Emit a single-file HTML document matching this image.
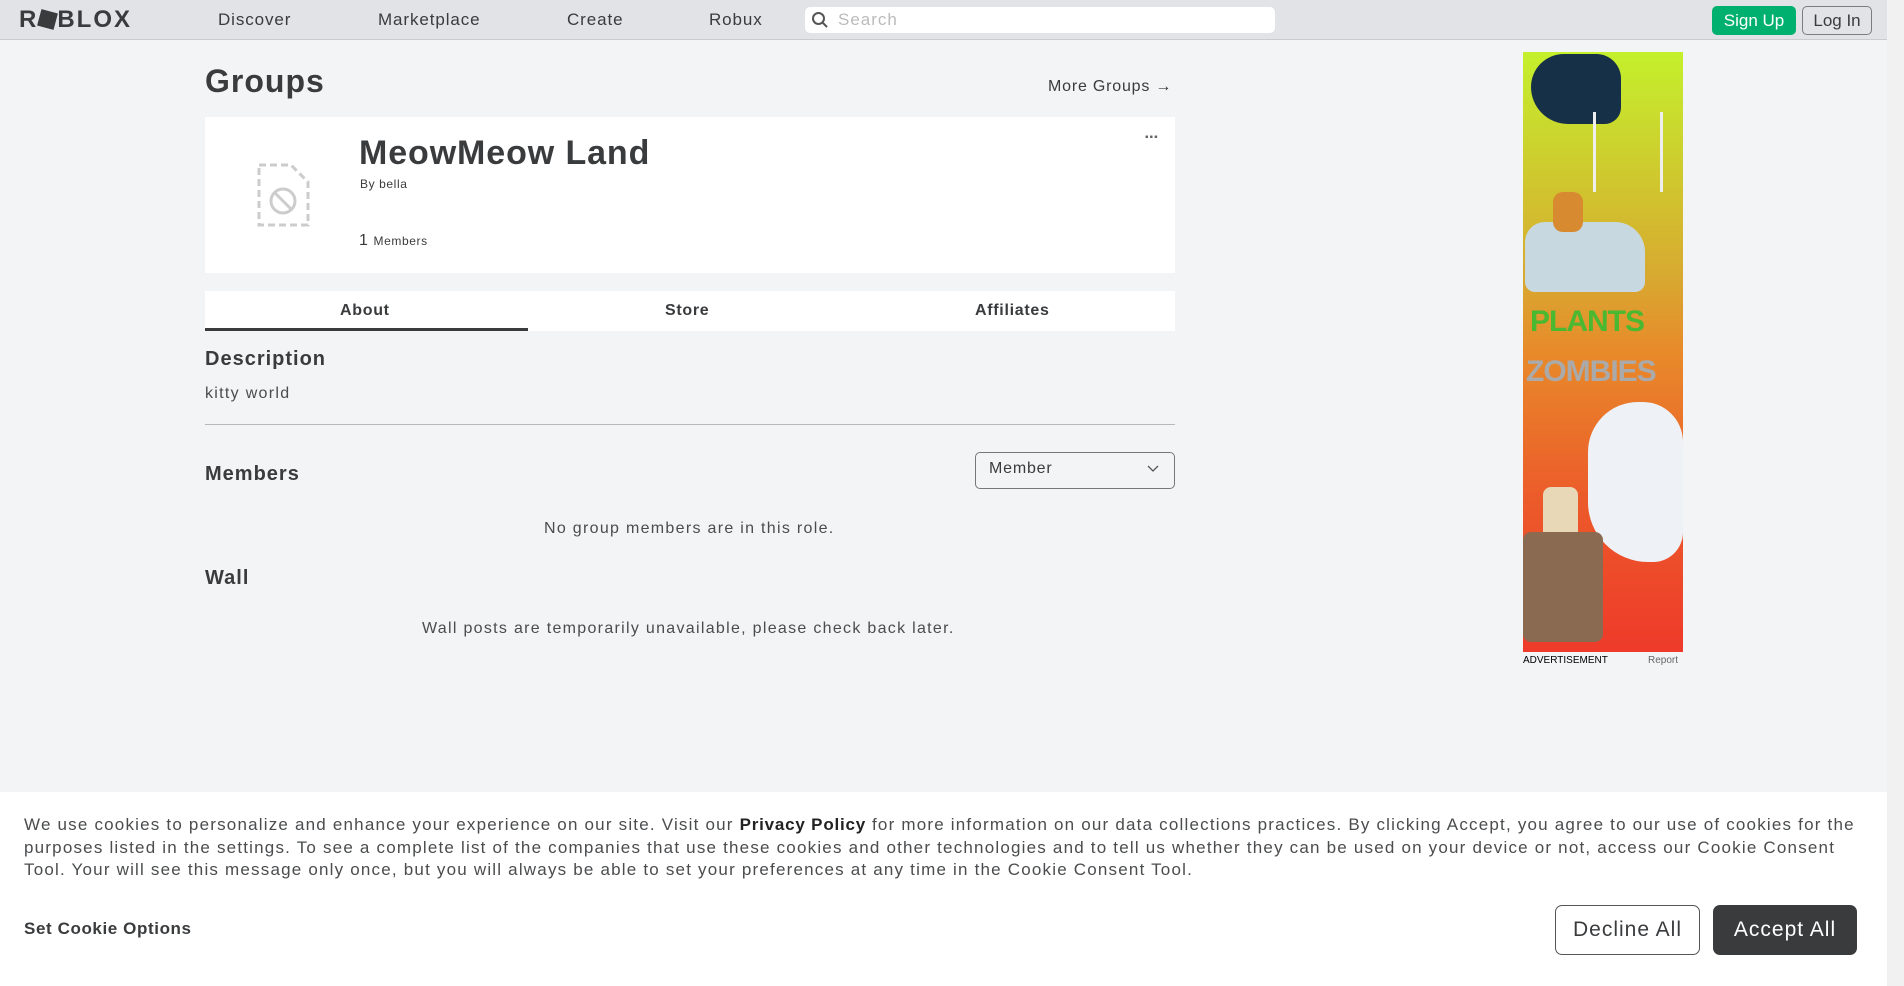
<!DOCTYPE html>
<html><head><meta charset="utf-8"><style>
*{box-sizing:border-box;margin:0;padding:0}
body{width:1904px;height:986px;overflow:hidden;background:#f2f4f5;font-family:"Liberation Sans",sans-serif;color:#393b3d;position:relative}
.a{position:absolute;white-space:nowrap}
.hdr{position:absolute;left:0;top:0;width:1887px;height:40px;background:#e1e3e6;border-bottom:1px solid #c9cbcd}
.nav{font-size:17px;color:#393b3d;top:10px;letter-spacing:0.9px}
.sb{position:absolute;right:0;top:0;width:17px;height:986px;background:#f1f1f1}
.t{letter-spacing:1.3px;color:#4a4c4e}
.h{letter-spacing:1px}
</style></head><body>
<div class="hdr"></div>
<div class="a" style="left:19px;top:6px;font-size:24px;font-weight:bold;color:#393b3d;letter-spacing:2px">R<span style="display:inline-block;width:17px;height:17px;background:#393b3d;transform:rotate(15deg);margin:0 1px;position:relative;top:1px"></span>BLOX</div>
<div class="a nav" style="left:218px">Discover</div>
<div class="a nav" style="left:378px">Marketplace</div>
<div class="a nav" style="left:567px">Create</div>
<div class="a nav" style="left:709px">Robux</div>
<div class="a" style="left:805px;top:7px;width:470px;height:26px;background:#fff;border-radius:5px"></div>
<svg class="a" style="left:811px;top:11px" width="18" height="18" viewBox="0 0 18 18"><circle cx="7.5" cy="7.5" r="5.5" fill="none" stroke="#555" stroke-width="2"/><path d="M11.5 11.5L16 16" stroke="#555" stroke-width="2"/></svg>
<div class="a" style="left:838px;top:10px;font-size:17px;color:#bbb;letter-spacing:1px">Search</div>
<div class="a" style="left:1712px;top:6px;width:84px;height:29px;background:#00b06f;border-radius:5px;color:#fff;font-size:17px;text-align:center;line-height:29px">Sign Up</div>
<div class="a" style="left:1802px;top:6px;width:70px;height:29px;border:1px solid #7a7c7e;border-radius:5px;font-size:17px;text-align:center;line-height:27px">Log In</div>
<div class="sb"></div>

<div class="a" style="left:205px;top:63px;font-size:32px;font-weight:bold;letter-spacing:1px">Groups</div>
<div class="a" style="left:1048px;top:78px;font-size:16px;letter-spacing:0.8px">More Groups →</div>
<div class="a" style="left:205px;top:117px;width:970px;height:156px;background:#fff"></div>
<svg class="a" style="left:257px;top:163px" width="53" height="64" viewBox="0 0 53 64"><path d="M2 2H34L51 19V62H2Z" fill="none" stroke="#ccc" stroke-width="3" stroke-dasharray="7 4"/><circle cx="26" cy="38" r="12" fill="none" stroke="#ccc" stroke-width="3"/><path d="M18 30L34 46" stroke="#ccc" stroke-width="3"/></svg>
<div class="a" style="left:359px;top:134px;font-size:34px;font-weight:bold;letter-spacing:0.9px">MeowMeow Land</div>
<div class="a" style="left:360px;top:177px;font-size:12px;letter-spacing:0.6px">By bella</div>
<div class="a" style="left:359px;top:232px;font-size:16px;letter-spacing:0.6px">1 <span style="font-size:12px">Members</span></div>
<div class="a" style="left:1145px;top:132px;font-size:10px;letter-spacing:1px;color:#666">▪▪▪</div>

<div class="a" style="left:205px;top:291px;width:970px;height:40px;background:#fff"></div>
<div class="a" style="left:205px;top:328px;width:323px;height:3px;background:#393b3d"></div>
<div class="a" style="left:340px;top:302px;font-size:16px;font-weight:bold;letter-spacing:0.7px">About</div>
<div class="a" style="left:665px;top:302px;font-size:16px;font-weight:bold;letter-spacing:0.7px">Store</div>
<div class="a" style="left:975px;top:302px;font-size:16px;font-weight:bold;letter-spacing:0.7px">Affiliates</div>

<div class="a h" style="left:205px;top:348px;font-size:20px;font-weight:bold">Description</div>
<div class="a t" style="left:205px;top:385px;font-size:16px">kitty world</div>
<div class="a" style="left:205px;top:424px;width:970px;height:1px;background:#b8b8b8"></div>
<div class="a h" style="left:205px;top:463px;font-size:20px;font-weight:bold">Members</div>
<div class="a" style="left:975px;top:452px;width:200px;height:37px;border:1px solid #777;border-radius:5px;background:#f2f4f5"></div>
<div class="a" style="left:989px;top:460px;font-size:16px;letter-spacing:0.8px">Member</div>
<svg class="a" style="left:1147px;top:465px" width="12" height="8"><path d="M1 1L6 6L11 1" fill="none" stroke="#555" stroke-width="1.3"/></svg>
<div class="a t" style="left:544px;top:520px;font-size:16px">No group members are in this role.</div>
<div class="a h" style="left:205px;top:567px;font-size:20px;font-weight:bold">Wall</div>
<div class="a t" style="left:422px;top:620px;font-size:16px">Wall posts are temporarily unavailable, please check back later.</div>

<div class="a" style="left:1523px;top:52px;width:160px;height:600px;background:linear-gradient(#c4f02c 0%,#d8a830 38%,#e88a2a 50%,#ec5a2a 75%,#ee3a2a 100%);overflow:hidden">
<div style="position:absolute;left:8px;top:2px;width:90px;height:70px;background:#163048;border-radius:40px 30px 20px 45px"></div>
<div style="position:absolute;left:70px;top:60px;width:70px;height:80px;border-left:3px solid #eee;border-right:3px solid #eee"></div>
<div style="position:absolute;left:2px;top:170px;width:120px;height:70px;background:#c8d8e0;border-radius:20px 30px 10px 10px"></div>
<div style="position:absolute;left:30px;top:140px;width:30px;height:40px;background:#d88a30;border-radius:10px"></div>
<div style="position:absolute;left:65px;top:350px;width:95px;height:160px;background:#eef2f6;border-radius:50px 40px 30px 60px"></div>
<div style="position:absolute;left:20px;top:435px;width:35px;height:60px;background:#e8d8b8;border-radius:8px"></div>
<div style="position:absolute;left:0;top:480px;width:80px;height:110px;background:#8a6a50;border-radius:8px"></div>
</div>
<div class="a" style="left:1530px;top:305px;font-size:30px;font-weight:bold;color:#4ab830;letter-spacing:-1px">PLANTS</div>
<div class="a" style="left:1526px;top:355px;font-size:30px;font-weight:bold;color:#aaa;letter-spacing:-1px">ZOMBIES</div>
<div class="a" style="left:1523px;top:655px;font-size:10px;color:#000">ADVERTISEMENT</div>
<div class="a" style="left:1648px;top:655px;font-size:10px;color:#666">Report</div>

<div class="a" style="left:0;top:792px;width:1887px;height:194px;background:#fff"></div>
<div class="a" style="left:24px;top:814px;font-size:17px;letter-spacing:1.2px;line-height:22.5px;color:#4a4c4e;white-space:normal;width:1850px">We use cookies to personalize and enhance your experience on our site. Visit our <b style="color:#222;letter-spacing:0.8px">Privacy Policy</b> for more information on our data collections practices. By clicking Accept, you agree to our use of cookies for the purposes listed in the settings. To see a complete list of the companies that use these cookies and other technologies and to tell us whether they can be used on your device or not, access our Cookie Consent Tool. Your will see this message only once, but you will always be able to set your preferences at any time in the Cookie Consent Tool.</div>
<div class="a" style="left:24px;top:919px;font-size:17px;font-weight:bold;letter-spacing:0.6px">Set Cookie Options</div>
<div class="a" style="left:1555px;top:905px;width:145px;height:50px;border:1px solid #555;border-radius:7px;font-size:21px;text-align:center;line-height:48px;color:#393b3d;letter-spacing:1px">Decline All</div>
<div class="a" style="left:1713px;top:905px;width:144px;height:50px;background:#393b3d;border-radius:7px;font-size:21px;text-align:center;line-height:50px;color:#fff;letter-spacing:1px">Accept All</div>
</body></html>
